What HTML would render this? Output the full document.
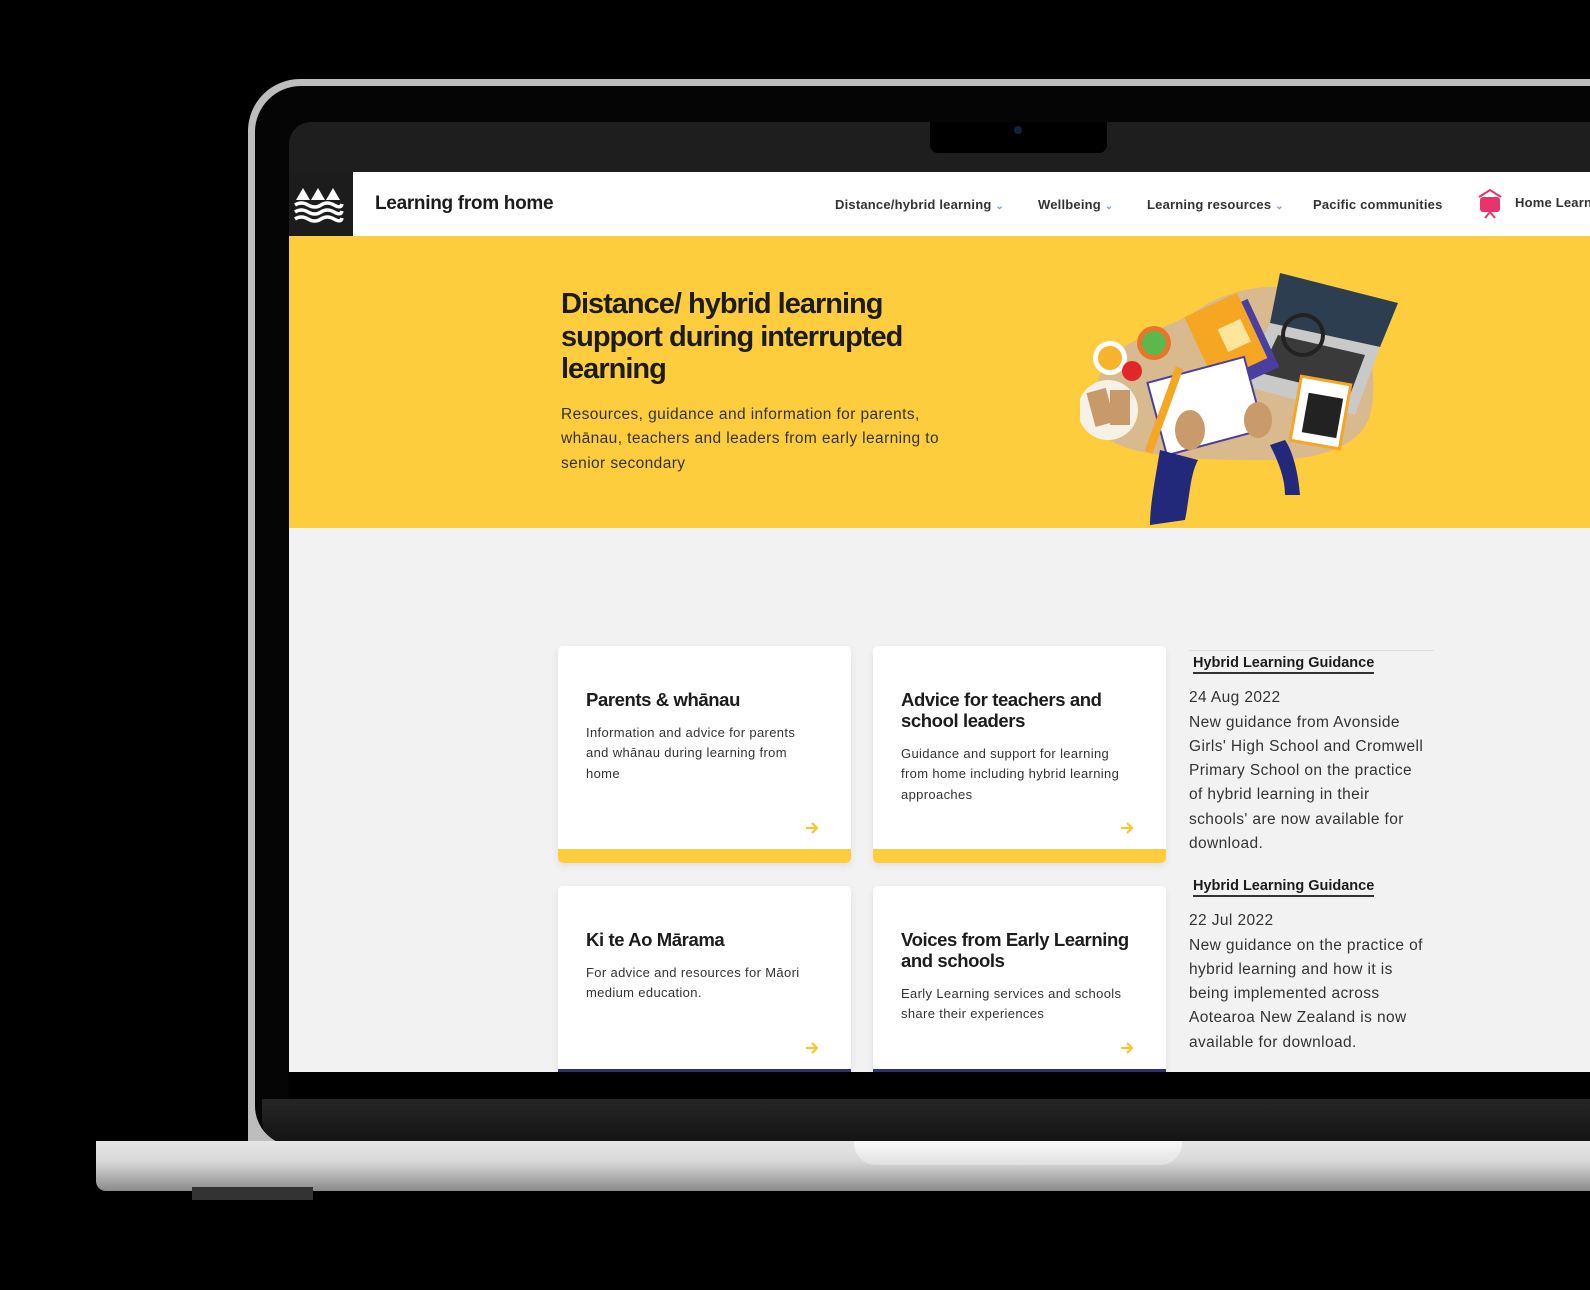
<!DOCTYPE html>
<html><head><meta charset="utf-8"><style>
*{margin:0;padding:0;box-sizing:border-box}
body{width:1590px;height:1290px;background:#000;position:relative;overflow:hidden;font-family:"Liberation Sans",sans-serif;color:#222}
.abs{position:absolute}
#silver{left:248px;top:79px;width:1400px;height:1080px;border-radius:52px 0 0 0;background:#bdbdbd}
#bezel{left:255px;top:86px;width:1400px;height:1060px;border-radius:46px 0 0 40px;background:#050505}
#botband{left:262px;top:1099px;width:1328px;height:42px;background:linear-gradient(#262626,#141414);border-radius:0 0 0 20px}
#screen{left:289px;top:122px;width:1301px;height:950px;background:#1e1e1e;border-radius:22px 0 0 0;overflow:hidden}
#notch{left:930px;top:122px;width:177px;height:31px;background:#000;border-radius:0 0 8px 8px}
#nav{left:289px;top:172px;width:1301px;height:64px;background:#fff}
#logo{left:289px;top:172px;width:64px;height:64px;background:#1c1c1c}
.nav{font-size:13px;font-weight:bold;color:#333;top:197px;white-space:nowrap;letter-spacing:.2px}
#hero{left:289px;top:236px;width:1301px;height:292px;background:#fecd3d}
#body{left:289px;top:528px;width:1301px;height:544px;background:#f2f2f2}
h1{position:absolute;left:561px;top:288px;font-size:29px;line-height:32.5px;letter-spacing:-1px;color:#1c1c1c;width:420px}
.sub{left:561px;top:403px;font-size:15.5px;line-height:24.3px;color:#333;width:405px;letter-spacing:.4px}
.card{background:#fff;border-radius:5px;box-shadow:0 3px 8px rgba(0,0,0,.08);overflow:hidden}
.card h3{position:absolute;left:28px;top:44px;font-size:18.5px;line-height:20.5px;letter-spacing:-.4px;color:#1c1c1c;width:250px}
.card p{position:absolute;left:28px;font-size:13px;line-height:20.3px;color:#333;width:232px;letter-spacing:.35px}
.arr{position:absolute;left:247px}
.bar{position:absolute;left:0;bottom:0;width:100%;height:14px;background:#fecd3d}
.side{left:1189px;width:238px;font-size:15.5px;line-height:24.3px;color:#333;letter-spacing:.4px}
.side b{display:inline-block;margin-left:4px;font-size:14.5px;color:#1c1c1c;border-bottom:2px solid #333;line-height:18px;letter-spacing:0}
#base{left:96px;top:1141px;width:1494px;height:50px;background:linear-gradient(#e6e6e6 0%,#d9d9d9 40%,#8a8a8a 100%);border-radius:0 0 0 10px}
#bnotch{left:854px;top:1141px;width:328px;height:24px;background:linear-gradient(#fafafa,#e0e0e0);border-radius:0 0 22px 22px}
#foot{left:192px;top:1187px;width:121px;height:13px;background:#333}
</style></head><body>
<div class="abs" id="silver"></div>
<div class="abs" id="bezel"></div>
<div class="abs" id="botband"></div>
<div class="abs" id="screen"></div>
<div class="abs" id="notch"><div style="position:absolute;left:84px;top:4px;width:8px;height:8px;border-radius:50%;background:#15223a"></div></div>
<div class="abs" id="nav"></div>
<div class="abs" id="logo"><svg width="64" height="64" viewBox="0 0 64 64"><g fill="#fff"><path d="M7 28 L14 16 L21 28Z M22 28 L29 16 L36 28Z M37 28 L44 16 L51 28Z"/></g><g stroke="#fff" stroke-width="3.5" fill="none"><path d="M6 33 q6 -4 13 0 t13 0 t13 0 t8 -1"/><path d="M6 40 q6 -4 13 0 t13 0 t13 0 t8 -1"/><path d="M6 47 q6 -4 13 0 t13 0 t13 0 t8 -1"/></g></svg></div>
<div class="abs" style="left:375px;top:193px;font-size:19px;font-weight:bold;color:#1c1c1c;letter-spacing:-.3px">Learning from home</div>
<div class="abs nav" style="left:835px">Distance/hybrid learning <span style="color:#7aa0d8;font-size:10px">&#8964;</span></div>
<div class="abs nav" style="left:1038px">Wellbeing <span style="color:#7aa0d8;font-size:10px">&#8964;</span></div>
<div class="abs nav" style="left:1147px">Learning resources <span style="color:#7aa0d8;font-size:10px">&#8964;</span></div>
<div class="abs nav" style="left:1313px">Pacific communities</div>
<svg class="abs" style="left:1476px;top:188px" width="28" height="32" viewBox="0 0 28 32"><path d="M3 9 L14 2 L25 9" stroke="#e8336b" stroke-width="2" fill="none"/><rect x="4" y="9" width="20" height="15" rx="3" fill="#e8336b"/><path d="M9 30 L14 24 L19 30" stroke="#e8336b" stroke-width="2" fill="none"/></svg>
<div class="abs nav" style="left:1515px;top:195px">Home Learning</div>
<div class="abs" id="hero"></div>
<h1>Distance/ hybrid learning support during interrupted learning</h1>
<div class="abs sub">Resources, guidance and information for parents, wh&#257;nau, teachers and leaders from early learning to senior secondary</div>
<svg class="abs" style="left:1080px;top:265px" width="330" height="265" viewBox="0 0 330 265">
<path d="M20 110 C30 80 70 70 110 50 C150 20 200 15 240 30 C290 50 300 110 290 150 C280 185 230 195 190 195 C140 195 60 195 30 175 C10 160 12 130 20 110Z" fill="#d9b98e"/>
<path d="M200 8 L318 38 L300 82 L190 58Z" fill="#2c3e50"/>
<path d="M190 58 L300 82 L275 150 L160 120Z" fill="#c9c9c9"/>
<path d="M198 70 L285 90 L270 130 L180 108Z" fill="#3a3a3a"/>
<circle cx="223" cy="70" r="20" fill="none" stroke="#222" stroke-width="4"/>
<g transform="rotate(-25 160 65)"><rect x="120" y="40" width="60" height="75" fill="#4a3fa0"/><rect x="115" y="30" width="58" height="72" fill="#f5a623"/><rect x="140" y="55" width="25" height="25" fill="#fde59a"/></g>
<circle cx="74" cy="78" r="17" fill="#e8752c"/><circle cx="74" cy="78" r="12" fill="#5cb84a"/>
<circle cx="30" cy="93" r="17" fill="#fff"/><circle cx="30" cy="93" r="12" fill="#f7b32b"/>
<circle cx="52" cy="106" r="10" fill="#e02828"/>
<circle cx="28" cy="145" r="30" fill="#f5f1e6"/><rect x="10" y="125" width="20" height="35" fill="#c89a6a" transform="rotate(-15 20 140)"/><rect x="30" y="125" width="20" height="35" fill="#c89a6a"/>
<g transform="rotate(-15 120 140)"><rect x="75" y="105" width="100" height="75" fill="#fff" stroke="#4a3fa0" stroke-width="2"/></g>
<rect x="80" y="100" width="8" height="90" fill="#f5a623" transform="rotate(20 84 145)"/>
<g transform="rotate(10 240 150)"><rect x="215" y="115" width="50" height="65" fill="#fff" stroke="#f5a623" stroke-width="3"/><rect x="225" y="130" width="35" height="40" fill="#222"/></g>
<path d="M80 185 C75 215 70 240 70 260 L105 255 C110 230 110 210 118 195Z" fill="#22287a"/>
<path d="M190 180 C200 200 205 215 205 230 L220 230 C218 205 212 185 205 175Z" fill="#22287a"/>
<ellipse cx="110" cy="165" rx="15" ry="20" fill="#c99a6a"/><ellipse cx="178" cy="155" rx="14" ry="18" fill="#c99a6a"/>
</svg>
<div class="abs" id="body"></div>
<div class="abs card" style="left:558px;top:646px;width:293px;height:217px"><h3>Parents &amp; wh&#257;nau</h3><p style="top:77px">Information and advice for parents and wh&#257;nau during learning from home</p><svg class="arr" style="top:175px" width="14" height="14" viewBox="0 0 14 14"><path d="M1 7 H12 M7 2 L12 7 L7 12" stroke="#f7c531" stroke-width="2.2" fill="none"/></svg><div class="bar"></div></div>
<div class="abs card" style="left:873px;top:646px;width:293px;height:217px"><h3>Advice for teachers and school leaders</h3><p style="top:98px">Guidance and support for learning from home including hybrid learning approaches</p><svg class="arr" style="top:175px" width="14" height="14" viewBox="0 0 14 14"><path d="M1 7 H12 M7 2 L12 7 L7 12" stroke="#f7c531" stroke-width="2.2" fill="none"/></svg><div class="bar"></div></div>
<div class="abs card" style="left:558px;top:886px;width:293px;height:186px;border-radius:5px 5px 0 0"><h3>Ki te Ao M&#257;rama</h3><p style="top:77px">For advice and resources for M&#257;ori medium education.</p><svg class="arr" style="top:155px" width="14" height="14" viewBox="0 0 14 14"><path d="M1 7 H12 M7 2 L12 7 L7 12" stroke="#f7c531" stroke-width="2.2" fill="none"/></svg><div style="position:absolute;left:0;top:183px;width:100%;height:3px;background:#2e2f7a"></div></div>
<div class="abs card" style="left:873px;top:886px;width:293px;height:186px;border-radius:5px 5px 0 0"><h3>Voices from Early Learning and schools</h3><p style="top:98px">Early Learning services and schools share their experiences</p><svg class="arr" style="top:155px" width="14" height="14" viewBox="0 0 14 14"><path d="M1 7 H12 M7 2 L12 7 L7 12" stroke="#f7c531" stroke-width="2.2" fill="none"/></svg><div style="position:absolute;left:0;top:183px;width:100%;height:3px;background:#2e2f7a"></div></div>
<div class="abs" style="left:1189px;top:650px;width:245px;height:1px;background:#ddd"></div>
<div class="abs side" style="top:651px"><b>Hybrid Learning Guidance</b><div style="margin-top:11px">24 Aug 2022<br>New guidance from Avonside Girls' High School and Cromwell Primary School on the practice of hybrid learning in their schools' are now available for download.</div></div>
<div class="abs side" style="top:874px"><b>Hybrid Learning Guidance</b><div style="margin-top:11px">22 Jul 2022<br>New guidance on the practice of hybrid learning and how it is being implemented across Aotearoa New Zealand is now available for download.</div></div>
<div class="abs" style="left:289px;top:1072px;width:1301px;height:27px;background:#000"></div>
<div class="abs" id="base"></div>
<div class="abs" id="bnotch"></div>
<div class="abs" id="foot"></div>
</body></html>
